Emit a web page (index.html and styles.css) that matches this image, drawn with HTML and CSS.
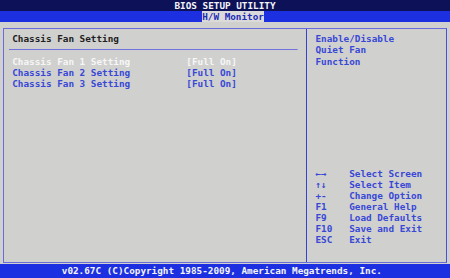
FILE: index.html
```html
<!DOCTYPE html>
<html>
	<head>
		<meta charset="UTF-8">
		<title>BIOS SETUP UTILITY</title>
		<link rel="stylesheet" href="styles.css">
	</head>
	<body>
		<div class="screen">
			<div class="title">BIOS SETUP UTILITY</div>
			<div class="tabs"><span class="tab">H/W Monitor</span></div>
			<div class="main">
				<div class="frame">
					<div class="panel">
						<div class="heading">Chassis Fan Setting</div>
						<div class="rule"></div>
						<div class="item selected"><span>Chassis Fan 1 Setting</span><span>[Full On]</span></div>
						<div class="item"><span>Chassis Fan 2 Setting</span><span>[Full On]</span></div>
						<div class="item"><span>Chassis Fan 3 Setting</span><span>[Full On]</span></div>
					</div>
					<div class="help">
						<div class="help-text">Enable/Disable<br>Quiet Fan<br>Function</div>
						<ul class="keys">
							<li><span>←→</span>Select Screen</li>
							<li><span>↑↓</span>Select Item</li>
							<li><span>+-</span>Change Option</li>
							<li><span>F1</span>General Help</li>
							<li><span>F9</span>Load Defaults</li>
							<li><span>F10</span>Save and Exit</li>
							<li><span>ESC</span>Exit</li>
						</ul>
					</div>
				</div>
			</div>
			<div class="status">v02.67C (C)Copyright 1985-2009, American Megatrends, Inc.</div>
		</div>
	</body>
</html>
```
FILE: styles.css
```css
*{
    margin: 0;
    padding: 0;
}
body{
    background: #d0d0cf;
}
.screen{
    width: 450px;
    height: 278px;
    overflow: hidden;
    font: bold 9.343px/11.12px "DejaVu Sans Mono", monospace;
    color: #3848d6;
}
.title{
    height: 11.12px;
    background: #0d1258;
    color: #f4f4f8;
    text-align: center;
}
.tabs{
    height: 11.12px;
    background: #1c30e2;
    padding-left: 36ch;
}
.tab{
    display: inline-block;
    height: 11.12px;
    background: #dadada;
    color: #1e2cb8;
}
.main{
    height: 241.76px;
    padding: 5.56px 2.8px 2.5px;
    box-sizing: border-box;
}
.frame{
    display: grid;
    grid-template-columns: 54ch 1fr;
    height: 100%;
    border: 1px solid #6a6cdc;
    border-right-color: #4a52d4;
}
.panel{
    padding: 4.56px 1ch 0 1.5ch;
    border-right: 1px solid #3444d0;
}
.heading{
    color: #202020;
}
.rule{
    height: 11.12px;
    margin: 0 0.5ch 0 -0.5ch;
    background: linear-gradient(#7072de, #7072de) no-repeat center / 100% 1px;
}
.item{
    display: grid;
    grid-template-columns: 31ch auto;
}
.item.selected{
    color: #f6f6f6;
}
.help{
    display: flex;
    flex-direction: column;
    padding: 4.56px 0 17px 1.5ch;
}
.keys{
    list-style: none;
    margin-top: auto;
}
.keys li{
    display: grid;
    grid-template-columns: 6ch auto;
}
.status{
    height: 14px;
    line-height: 14px;
    background: #1c30e2;
    color: #f4f4f8;
    padding-left: 11ch;
}
```
